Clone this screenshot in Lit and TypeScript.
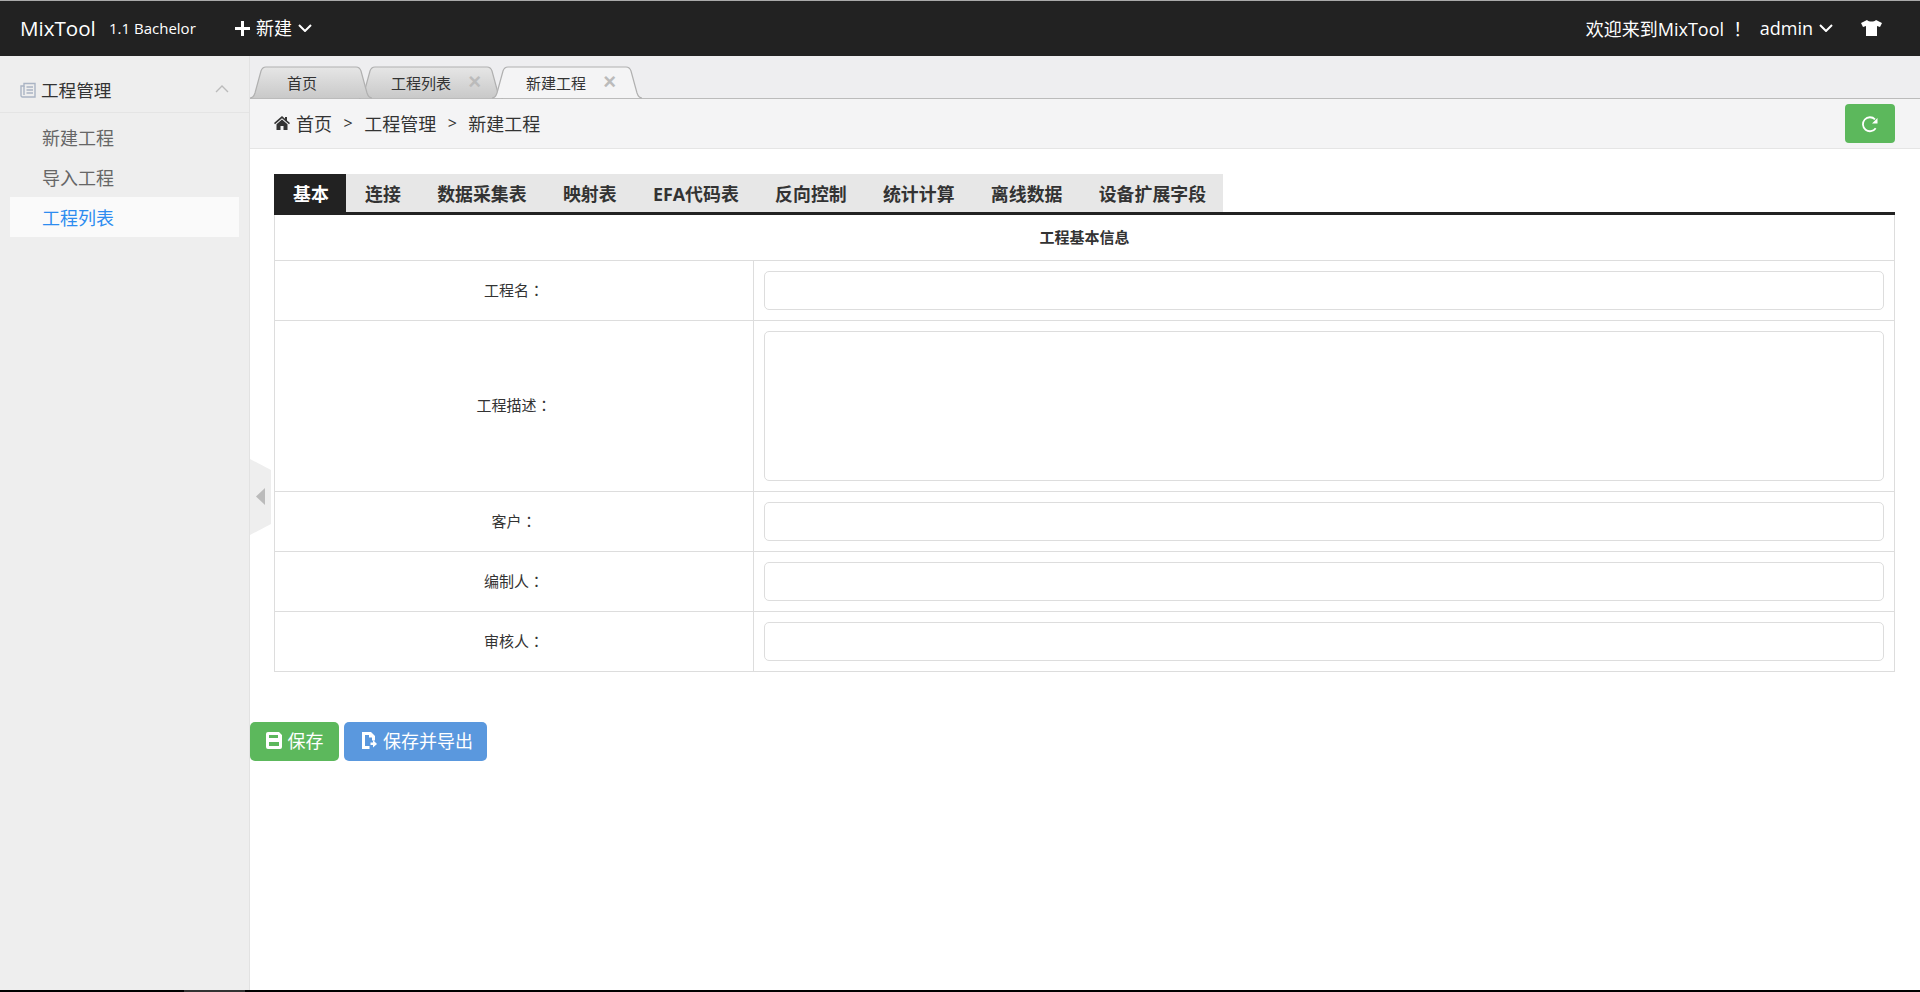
import { LitElement, html, css, svg } from "lit";
import { customElement } from "lit/decorators.js";

interface PageTab {
  label: string;
  width: number;
  overlap: number;
  labelLeft: number;
  closeRight?: number;
  active?: boolean;
}

const pageTabs: PageTab[] = [
  { label: "首页", width: 122, overlap: 0, labelLeft: 37 },
  { label: "工程列表", width: 144, overlap: 13, labelLeft: 32, closeRight: 22 },
  { label: "新建工程", width: 150, overlap: 11, labelLeft: 34, closeRight: 26, active: true },
];

const formTabs = ["基本", "连接", "数据采集表", "映射表", "EFA代码表", "反向控制", "统计计算", "离线数据", "设备扩展字段"];

const chevronDown = html`<svg class="chev" viewBox="0 0 14 8"><polyline points="1,1 7,7 13,1" /></svg>`;

function tabShape(w: number, active: boolean) {
  const d = `M0 32 C3 32 4 30 5 27 L11 5 C12 2 13 1 16 1 H${w - 16} C${w - 13} 1 ${w - 12} 2 ${w - 11} 5 L${w - 5} 27 C${w - 4} 30 ${w - 3} 32 ${w} 32`;
  return svg`
    <defs>
      <linearGradient id="tg" x1="0" y1="0" x2="0" y2="1">
        <stop offset="0" stop-color="#e6e6e6" />
        <stop offset="1" stop-color="#c9c9c9" />
      </linearGradient>
    </defs>
    <path d="${d} Z" fill="${active ? "#f4f4f5" : "url(#tg)"}" />
    <path d="${d}" fill="none" stroke="#b0b0b0" stroke-width="1.2" />
  `;
}

/* =========================
   ROOT
========================= */
@customElement("app-root")
class AppRoot extends LitElement {
  static styles = css`
    :host {
      display: flex;
      flex-direction: column;
      height: 992px;
      overflow: hidden;
      background: #fff;
      color: #333;
      font-family: "Open Sans", "Noto Sans CJK SC", sans-serif;
    }
    .punct {
      font-family: "Noto Sans CJK TC", sans-serif;
    }
    .topline {
      height: 1px;
      background: #aaa;
      flex: none;
    }
    .header {
      height: 55px;
      flex: none;
      background: #222;
      color: #fff;
      display: flex;
      align-items: center;
      padding-left: 20px;
      padding-right: 38px;
      padding-bottom: 1px;
      box-sizing: border-box;
    }
    .brand {
      font-size: 20.6px;
      width: 89px;
    }
    .version {
      font-size: 15px;
      width: 126px;
    }
    .new {
      display: flex;
      align-items: center;
      font-size: 18px;
      line-height: 1;
    }
    .plus {
      width: 15px;
      height: 15px;
      margin-right: 6px;
      fill: #fff;
    }
    .chev {
      width: 14px;
      height: 8px;
      margin-left: 6px;
      fill: none;
      stroke: #fff;
      stroke-width: 2;
    }
    .right {
      margin-left: auto;
      display: flex;
      align-items: center;
      font-size: 18px;
    }
    .welcome {
      margin-right: 13px;
    }
    .shirt {
      width: 21px;
      height: 16px;
      margin-left: 28px;
      fill: #fff;
    }
    .body {
      flex: 1;
      display: flex;
      min-height: 0;
    }
    .strip {
      height: 2px;
      flex: none;
      background: #000;
      display: flex;
    }
    .strip i {
      width: 61px;
      margin-left: 184px;
      background: #333;
    }
    .side {
      width: 250px;
      flex: none;
      box-sizing: border-box;
      background: #eee;
      border-right: 1px solid #e2e2e2;
    }
    .group {
      height: 57px;
      box-sizing: border-box;
      border-bottom: 1px solid #e4e4e4;
      display: flex;
      align-items: center;
      padding: 10px 20px 0;
      font-size: 17.6px;
      color: #333;
    }
    .group .doc {
      width: 16px;
      height: 17px;
      margin-right: 5px;
      fill: none;
      stroke: #aab4c4;
      stroke-width: 1.4;
    }
    .up {
      margin-left: auto;
      width: 14px;
      height: 8px;
      fill: none;
      stroke: #bbb;
      stroke-width: 1.4;
    }
    .items {
      padding-top: 4px;
    }
    .item {
      height: 40px;
      margin: 0 10px;
      padding-left: 32px;
      display: flex;
      align-items: center;
      font-size: 18px;
      color: #666;
    }
    .item.active {
      background: #fafafa;
      color: #2d8cf0;
    }
    .main {
      flex: 1;
      min-width: 0;
      position: relative;
    }
    .tabbar {
      height: 43px;
      box-sizing: border-box;
      background: #eeeef0;
      border-bottom: 1px solid #bbb;
      padding-top: 10px;
      display: flex;
    }
    .ptab {
      position: relative;
      height: 32px;
      display: flex;
      align-items: center;
      font-size: 15px;
      color: #333;
    }
    .ptab:first-child {
      z-index: 1;
    }
    .ptab svg {
      position: absolute;
      left: 0;
      top: 0;
      overflow: visible;
    }
    .ptab .label {
      position: relative;
    }
    .ptab .x {
      position: absolute;
      top: 3px;
      font-size: 22px;
      font-weight: 700;
      line-height: 26px;
      color: #bbb;
      font-family: "Liberation Sans", sans-serif;
    }
    .crumb {
      height: 50px;
      box-sizing: border-box;
      background: #f4f4f5;
      border-bottom: 1px solid #e5e5e5;
      display: flex;
      align-items: center;
      padding: 0 25px 0 24px;
      font-size: 18px;
    }
    .crumb .txt {
      display: flex;
      align-items: center;
      padding-bottom: 2px;
    }
    .crumb .home {
      width: 16px;
      height: 14px;
      margin-right: 6px;
      fill: #333;
    }
    .crumb .sep {
      margin: 0 11.500px;
      font-size: 16px;
    }
    .refresh {
      margin-left: auto;
      width: 50px;
      height: 39px;
      background: #5cb85c;
      border-radius: 4px;
      display: flex;
      align-items: center;
      justify-content: center;
    }
    .refresh svg {
      width: 18px;
      height: 18px;
      fill: none;
      stroke: #fff;
      stroke-width: 1.8;
    }
    .content {
      padding: 25px 25px 0 24px;
    }
    .ftabs {
      display: flex;
      border-bottom: 3px solid #222;
    }
    .ftab {
      height: 38px;
      padding: 0 17.300px 1px 19px;
      box-sizing: border-box;
      display: flex;
      align-items: center;
      background: #e7e7e7;
      font-size: 17.9px;
      font-weight: 700;
      color: #333;
    }
    .ftab.active {
      background: #222;
      color: #fff;
    }
    table {
      width: 100%;
      border-collapse: collapse;
      table-layout: fixed;
      font-size: 15px;
    }
    td {
      border: 1px solid #ddd;
      padding: 10px;
      text-align: center;
    }
    tr:first-child td {
      border-top: none;
    }
    .col-lab {
      width: 479px;
    }
    .title {
      height: 45px;
      padding: 0 0 2px;
      box-sizing: border-box;
      font-weight: 700;
      color: #333;
    }
    .lab {
      padding: 0 0 2px;
    }
    .field {
      display: block;
      width: 100%;
      box-sizing: border-box;
      height: 39px;
      border: 1px solid #ddd;
      border-radius: 5px;
      background: #fff;
    }
    .field.area {
      height: 150px;
    }
    .actions {
      display: flex;
      gap: 5px;
      margin-top: 50px;
    }
    .btn {
      height: 39px;
      box-sizing: border-box;
      padding-bottom: 2px;
      display: flex;
      align-items: center;
      justify-content: center;
      border-radius: 5px;
      color: #fff;
      font-size: 18px;
    }
    .btn svg {
      width: 16px;
      height: 17px;
      margin-right: 6px;
      fill: #fff;
    }
    .save {
      width: 89px;
      background: #5cb85c;
    }
    .export {
      width: 143px;
      padding-left: 3px;
      background: #5a98de;
    }
    .handle {
      position: absolute;
      left: 0;
      top: 403px;
      width: 21px;
      height: 76px;
    }
  `;

  private fieldRow(label: string, area = false) {
    return html`
      <tr>
        <td class="lab">${label}<span class="punct">：</span></td>
        <td><div class="field ${area ? "area" : ""}"></div></td>
      </tr>
    `;
  }

  render() {
    return html`
      <div class="topline"></div>
      <div class="header">
        <span class="brand">MixTool</span>
        <span class="version">1.1 Bachelor</span>
        <span class="new">
          <svg class="plus" viewBox="0 0 15 15"><path d="M6 0h3v6h6v3H9v6H6V9H0V6h6z" /></svg>
          新建${chevronDown}
        </span>
        <div class="right">
          <span class="welcome">欢迎来到MixTool <span class="punct">！</span></span>
          <span>admin</span>${chevronDown}
          <svg class="shirt" viewBox="0 0 21 16"><path d="M6 0L0 3l2 4 3-1v10h11V6l3 1 2-4-6-3c-2 2-7 2-9 0z" /></svg>
        </div>
      </div>
      <div class="body">
        <aside class="side">
          <div class="group">
            <svg class="doc" viewBox="0 0 16 17">
              <path d="M4 2.500H15V16H2.500a1.500 1.500 0 0 1-1.500-1.500V5H4z" />
              <path d="M4 5V14M6.500 6H13M6.500 9H13M6.500 12H13" />
            </svg>
            工程管理
            <svg class="up" viewBox="0 0 14 8"><polyline points="1,7 7,1 13,7" /></svg>
          </div>
          <div class="items">
            <div class="item">新建工程</div>
            <div class="item">导入工程</div>
            <div class="item active">工程列表</div>
          </div>
        </aside>
        <main class="main">
          <div class="tabbar">
            ${pageTabs.map(t => html`
              <div class="ptab" style="width:${t.width}px;margin-left:${-t.overlap}px">
                <svg width="${t.width}" height="32" viewBox="0 0 ${t.width} 32">${tabShape(t.width, !!t.active)}</svg>
                <span class="label" style="margin-left:${t.labelLeft}px">${t.label}</span>
                ${t.closeRight ? html`<span class="x" style="right:${t.closeRight}px">×</span>` : ""}
              </div>
            `)}
          </div>
          <div class="crumb">
            <div class="txt">
              <svg class="home" viewBox="0 0 16 14">
                <path d="M8 0L0 7l1 1.200L8 2.200l7 6L16 7l-3-2.600V1h-2v1.700z" />
                <path d="M8 3.500L2.500 8.200V14H6.500V10h3v4h4V8.200z" />
              </svg>
              首页<span class="sep">&gt;</span>工程管理<span class="sep">&gt;</span>新建工程
            </div>
            <div class="refresh">
              <svg viewBox="0 0 18 18">
                <path d="M14.700 13.200A7 7 0 1 1 14 4.400" />
                <path d="M16.500 3V8.500H11z" fill="#fff" stroke="none" />
              </svg>
            </div>
          </div>
          <div class="content">
            <div class="ftabs">
              ${formTabs.map((t, i) => html`<div class="ftab ${i === 0 ? "active" : ""}">${t}</div>`)}
            </div>
            <table>
              <colgroup><col class="col-lab" /><col /></colgroup>
              <tr><td class="title" colspan="2">工程基本信息</td></tr>
              ${this.fieldRow("工程名")}
              ${this.fieldRow("工程描述", true)}
              ${this.fieldRow("客户")}
              ${this.fieldRow("编制人")}
              ${this.fieldRow("审核人")}
            </table>
          </div>
          <div class="actions">
            <div class="btn save">
              <svg viewBox="0 0 16 17">
                <path fill-rule="evenodd" d="M2 0H13L16 3V15a2 2 0 0 1-2 2H2a2 2 0 0 1-2-2V2a2 2 0 0 1 2-2zM3 3V6H12V3zM3 10V14H13V10z" />
              </svg>
              保存
            </div>
            <div class="btn export">
              <svg viewBox="0 0 16 17">
                <path fill-rule="evenodd" d="M1 0H10L14 4V8.500H11V5.500H8V3H4V14H8.500V17H1z" />
                <path d="M9.500 10.500H12V8L16 12L12 15.500V13H9.500z" />
              </svg>
              保存并导出
            </div>
          </div>
          <svg class="handle" viewBox="0 0 21 76">
            <polygon points="0,0 21,11 21,65 0,76" fill="#eee" />
            <polygon points="15,29 15,46 6,37.500" fill="#bbb" />
          </svg>
        </main>
      </div>
      <div class="strip"><i></i></div>
    `;
  }
}
